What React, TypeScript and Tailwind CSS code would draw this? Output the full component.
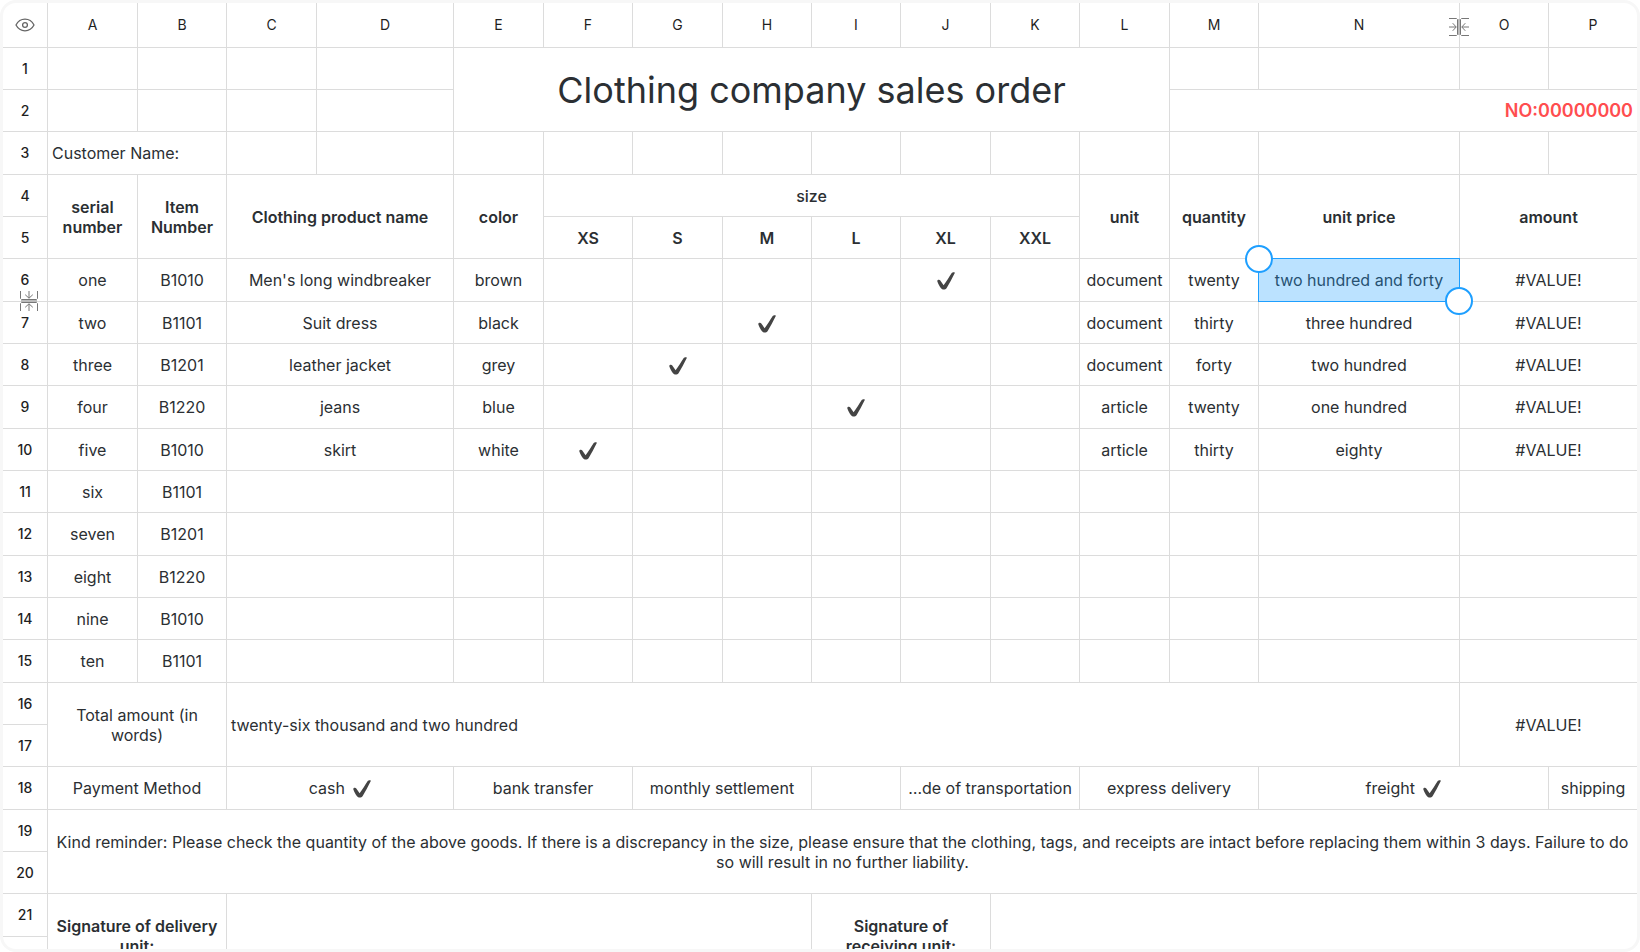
import type { ReactNode } from 'react';
import clsx from 'clsx';

interface Cell {
  text?: ReactNode;
  cols?: number;
  rows?: number;
  bold?: boolean;
  align?: 'left' | 'right';
  className?: string;
  selected?: boolean;
}

const columns = [
  { name: 'A', width: 'w-[90px]' },
  { name: 'B', width: 'w-[89px]' },
  { name: 'C', width: 'w-[90px]' },
  { name: 'D', width: 'w-[137px]' },
  { name: 'E', width: 'w-[90px]' },
  { name: 'F', width: 'w-[89px]' },
  { name: 'G', width: 'w-[90px]' },
  { name: 'H', width: 'w-[89px]' },
  { name: 'I', width: 'w-[89px]' },
  { name: 'J', width: 'w-[90px]' },
  { name: 'K', width: 'w-[89px]' },
  { name: 'L', width: 'w-[90px]' },
  { name: 'M', width: 'w-[89px]' },
  { name: 'N', width: 'w-[201px]' },
  { name: 'O', width: 'w-[89px]' },
  { name: 'P', width: 'w-[89px]' },
];

const sizes = ['XS', 'S', 'M', 'L', 'XL', 'XXL'];

const items = [
  { serial: 'one', code: 'B1010', name: "Men's long windbreaker", color: 'brown', size: 'XL', unit: 'document', quantity: 'twenty', price: 'two hundred and forty' },
  { serial: 'two', code: 'B1101', name: 'Suit dress', color: 'black', size: 'M', unit: 'document', quantity: 'thirty', price: 'three hundred' },
  { serial: 'three', code: 'B1201', name: 'leather jacket', color: 'grey', size: 'S', unit: 'document', quantity: 'forty', price: 'two hundred' },
  { serial: 'four', code: 'B1220', name: 'jeans', color: 'blue', size: 'L', unit: 'article', quantity: 'twenty', price: 'one hundred' },
  { serial: 'five', code: 'B1010', name: 'skirt', color: 'white', size: 'XS', unit: 'article', quantity: 'thirty', price: 'eighty' },
  { serial: 'six', code: 'B1101' },
  { serial: 'seven', code: 'B1201' },
  { serial: 'eight', code: 'B1220' },
  { serial: 'nine', code: 'B1010' },
  { serial: 'ten', code: 'B1101' },
];

function Check({ className }: { className?: string }) {
  return (
    <svg viewBox="0 0 18 18" className={clsx('inline-block size-[18px] align-[-4px]', className)} fill="#444" role="img" aria-label="checked">
      <path d="M.3 9.2C.1 7.900 2.400 7.200 3.300 8.400L6.600 13.200C9.500 9.500 12.100 4.800 14.700 1C15.400-.1 18.300-.1 17.800 1C15 6.500 12.400 11.800 9.700 15.900C8.300 18 5.400 18 4 16.200C2.500 14.300 1.200 11.800 .3 9.200Z" />
    </svg>
  );
}

function ResizeIcon({ className }: { className?: string }) {
  return (
    <svg viewBox="0 0 20 20" className={clsx('size-5', className)} fill="none" stroke="#777" strokeWidth="1">
      <path d="M0 1.500H7.500L8.500 2.500V17.500L7.500 18.500H0M20 1.500H12.500L11.500 2.500V17.500L12.500 18.500H20" />
      <path d="M10 2V18" stroke="#bbb" strokeWidth="2" />
      <path d="M0 10H7.200M3.700 6.200L7.200 10L3.700 13.800M20 10H12.800M16.300 6.200L12.800 10L16.300 13.800" />
    </svg>
  );
}

function EyeIcon() {
  return (
    <svg viewBox="0 0 20 14" className="h-3.5 w-5" fill="none" stroke="#666" strokeWidth="1.300">
      <path d="M1 7C3 3.200 6.200 1.200 10 1.200S17 3.200 19 7C17 10.800 13.800 12.800 10 12.800S3 10.800 1 7Z" />
      <circle cx="10" cy="7" r="2.400" />
    </svg>
  );
}

const empty = (count: number): Cell[] => Array.from({ length: count }, () => ({}));

const rows: Cell[][] = [
  [
    ...empty(4),
    { text: 'Clothing company sales order', cols: 8, rows: 2, className: 'text-4xl' },
    ...empty(4),
  ],
  [...empty(4), { text: 'NO:00000000', cols: 4, align: 'right', className: 'text-lg font-semibold text-[#ff4d4f]' }],
  [{ text: 'Customer Name:', cols: 2, align: 'left' }, ...empty(14)],
  [
    { text: 'serial number', rows: 2, bold: true },
    { text: 'Item Number', rows: 2, bold: true },
    { text: 'Clothing product name', cols: 2, rows: 2, bold: true },
    { text: 'color', rows: 2, bold: true },
    { text: 'size', cols: 6, className: 'font-medium' },
    { text: 'unit', rows: 2, bold: true },
    { text: 'quantity', rows: 2, bold: true },
    { text: 'unit price', rows: 2, bold: true },
    { text: 'amount', cols: 2, rows: 2, bold: true },
  ],
  sizes.map((size) => ({ text: size, bold: true })),
  ...items.map((item, index): Cell[] => [
    { text: item.serial },
    { text: item.code },
    { text: item.name, cols: 2 },
    { text: item.color },
    ...sizes.map((size) => ({ text: item.size === size ? <Check /> : undefined })),
    { text: item.unit },
    { text: item.quantity },
    { text: item.price, selected: index === 0 },
    { text: item.price ? '#VALUE!' : undefined, cols: 2 },
  ]),
  [
    { text: 'Total amount (in words)', cols: 2, rows: 2, className: 'px-5' },
    { text: 'twenty-six thousand and two hundred', cols: 12, rows: 2, align: 'left' },
    { text: '#VALUE!', cols: 2, rows: 2 },
  ],
  [],
  [
    { text: 'Payment Method', cols: 2 },
    { text: <>cash <Check className="ml-1" /></>, cols: 2 },
    { text: 'bank transfer', cols: 2 },
    { text: 'monthly settlement', cols: 2 },
    {},
    { text: '…de of transportation', cols: 2 },
    { text: 'express delivery', cols: 2 },
    { text: <>freight <Check className="ml-1" /></>, cols: 2 },
    { text: 'shipping' },
  ],
  [
    {
      text: 'Kind reminder: Please check the quantity of the above goods. If there is a discrepancy in the size, please ensure that the clothing, tags, and receipts are intact before replacing them within 3 days. Failure to do so will result in no further liability.',
      cols: 16,
      rows: 2,
    },
  ],
  [],
  [
    { text: 'Signature of delivery unit:', cols: 2, rows: 2, bold: true },
    { cols: 6, rows: 2 },
    { text: 'Signature of receiving unit:', cols: 2, rows: 2, bold: true, className: 'px-5' },
    { cols: 6, rows: 2 },
  ],
  [],
];

function SheetCell({ cell }: { cell: Cell }) {
  return (
    <td
      colSpan={cell.cols}
      rowSpan={cell.rows}
      className={clsx(
        'relative border-r border-b border-[#dcdcdc] p-0',
        cell.align === 'left' && 'text-left',
        cell.align === 'right' && 'text-right',
        !cell.align && 'text-center',
        cell.bold && 'font-semibold',
      )}
    >
      <div className={clsx('px-1', cell.className)}>{cell.text}</div>
      {cell.selected && (
        <div className="absolute -inset-px border border-[#1e9fff] bg-[#1e9fff]/30">
          <span className="absolute -top-3.5 -left-3.5 z-10 size-7 rounded-full border-2 border-[#1e9fff] bg-white" />
          <span className="absolute -right-3.5 -bottom-3.5 z-10 size-7 rounded-full border-2 border-[#1e9fff] bg-white" />
        </div>
      )}
    </td>
  );
}

export default function App() {
  return (
    <main className="h-screen overflow-hidden rounded-2xl border-3 border-[#f7f7f7] bg-white font-['Inter',sans-serif] text-base leading-5 text-[#2b2f33]">
      {/* one pixel wider than the frame, so the last column has no line at its right */}
      <table className="w-[calc(100%+1px)] table-fixed border-separate border-spacing-0">
        <colgroup>
          <col className="w-[45px]" />
          {columns.map((column) => (
            <col key={column.name} className={column.width} />
          ))}
        </colgroup>
        <thead>
          <tr className="h-[45px]">
            <th className="border-r border-b border-[#dcdcdc] p-0">
              <button type="button" aria-label="Toggle visibility" className="mx-auto flex">
                <EyeIcon />
              </button>
            </th>
            {columns.map((column) => (
              <th
                key={column.name}
                scope="col"
                className="relative border-r border-b border-[#dcdcdc] p-0 text-sm font-normal text-[#1f1f1f]"
              >
                {column.name}
                {column.name === 'N' && (
                  <button type="button" aria-label="Resize column N" className="absolute top-3.5 -right-2.5 z-10">
                    <ResizeIcon />
                  </button>
                )}
              </th>
            ))}
          </tr>
        </thead>
        <tbody>
          {rows.map((cells, index) => (
            <tr key={index} className={index % 3 === 2 ? 'h-[43px]' : 'h-[42px]'}>
              <th
                scope="row"
                className="relative border-r border-b border-[#dcdcdc] p-0 text-sm font-medium text-[#1f1f1f]"
              >
                {index + 1}
                {index === 5 && (
                  <button type="button" aria-label="Resize row 6" className="absolute -bottom-2.5 left-4 z-10">
                    <ResizeIcon className="rotate-90" />
                  </button>
                )}
              </th>
              {cells.map((cell, i) => (
                <SheetCell key={i} cell={cell} />
              ))}
            </tr>
          ))}
        </tbody>
      </table>
    </main>
  );
}
